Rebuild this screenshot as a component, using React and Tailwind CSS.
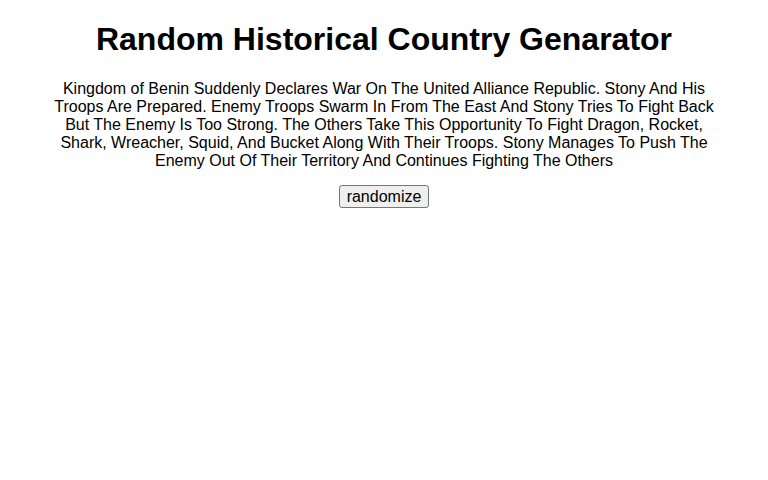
export default function App() {
  return (
    <div className="m-0 px-2 text-black bg-white" style={{ fontFamily: '"Liberation Sans", Arial, sans-serif' }}>
      <div className="h-[21px]" />
      <h1 className="text-[32px] leading-[37px] font-bold text-center">Random Historical Country Genarator</h1>
      <p className="mt-[22px] mx-auto w-[676px] text-[16px] leading-[18px] text-center">
        Kingdom of Benin Suddenly Declares War On The United Alliance Republic. Stony And His Troops Are Prepared. Enemy Troops Swarm In From The East And Stony Tries To Fight Back But The Enemy Is Too Strong. The Others Take This Opportunity To Fight Dragon, Rocket, Shark, Wreacher, Squid, And Bucket Along With Their Troops. Stony Manages To Push The Enemy Out Of Their Territory And Continues Fighting The Others
      </p>
      <div className="mt-[15px] flex justify-center">
        <button className="px-[7px] h-[23px] text-[16px] leading-[18px] bg-[#efefef] border border-[#767676] rounded-[3px] text-black">randomize</button>
      </div>
    </div>
  );
}
